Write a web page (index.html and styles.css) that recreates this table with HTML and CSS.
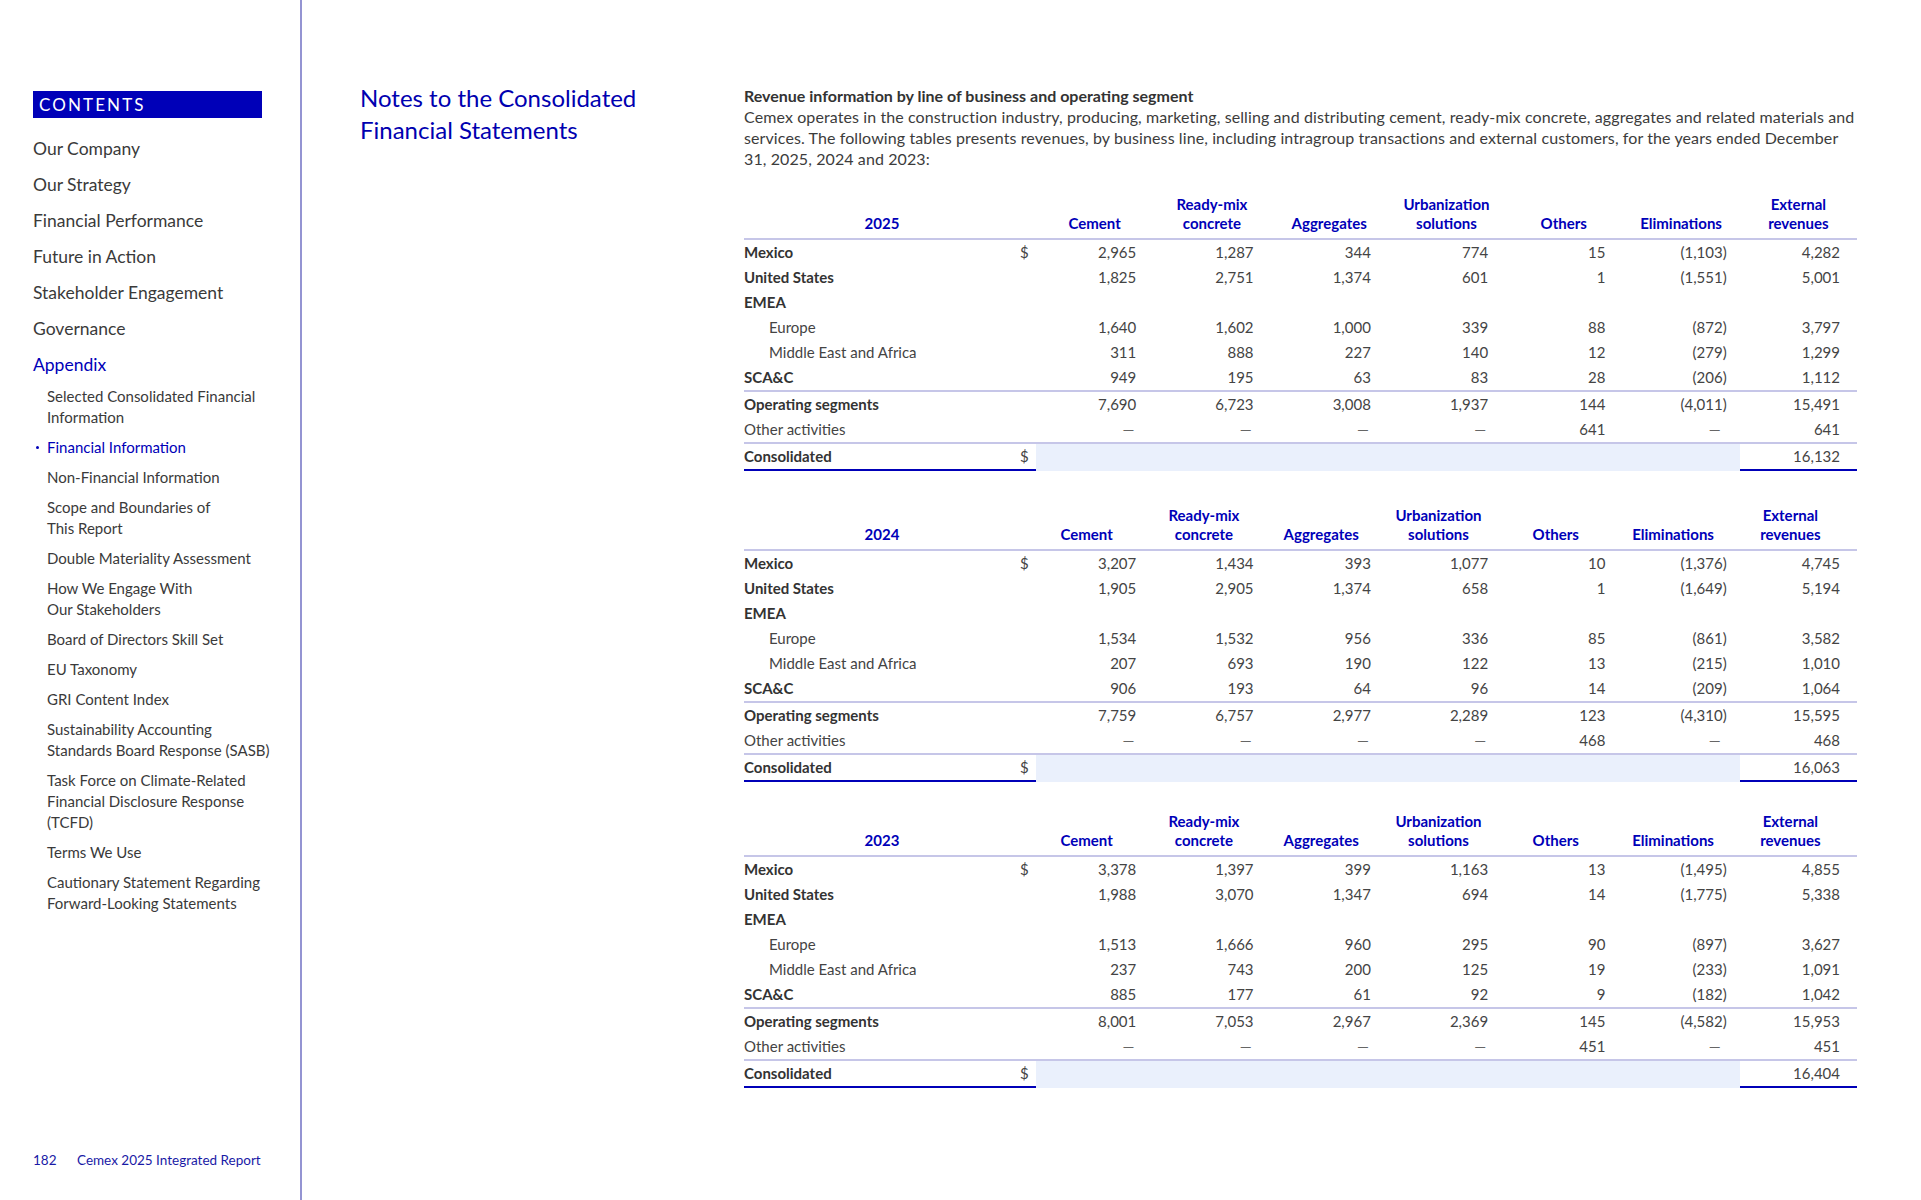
FILE: index.html
```html
<!DOCTYPE html>
<html lang="en">
<head>
<meta charset="UTF-8">
<meta name="viewport" content="width=device-width, initial-scale=1.0">
<title>Notes to the Consolidated Financial Statements</title>
<link rel="stylesheet" href="styles.css">
</head>
<body>

<div class="page">
  <aside class="sidebar">
    <div class="contents-label">CONTENTS</div>
    <ul class="nav">
      <li>Our Company</li>
      <li>Our Strategy</li>
      <li>Financial Performance</li>
      <li>Future in Action</li>
      <li>Stakeholder Engagement</li>
      <li>Governance</li>
      <li class="nav-active">Appendix
        <ul class="subnav">
          <li>Selected Consolidated Financial<br>Information</li>
          <li class="current">Financial Information</li>
          <li>Non-Financial Information</li>
          <li>Scope and Boundaries of<br>This Report</li>
          <li>Double Materiality Assessment</li>
          <li>How We Engage With<br>Our Stakeholders</li>
          <li>Board of Directors Skill Set</li>
          <li>EU Taxonomy</li>
          <li>GRI Content Index</li>
          <li>Sustainability Accounting<br>Standards Board Response (SASB)</li>
          <li>Task Force on Climate-Related<br>Financial Disclosure Response<br>(TCFD)</li>
          <li>Terms We Use</li>
          <li>Cautionary Statement Regarding<br>Forward-Looking Statements</li>
        </ul>
      </li>
    </ul>
    <div class="page-footer">
      <span class="page-num">182</span>
      <span>Cemex 2025 Integrated Report</span>
    </div>
  </aside>

  <main class="main">
    <h1 class="page-title">Notes to the Consolidated<br>Financial Statements</h1>

    <section class="content">
      <h2 class="section-head">Revenue information by line of business and operating segment</h2>
      <p class="intro">Cemex operates in the construction industry, producing, marketing, selling and distributing cement, ready-mix concrete, aggregates and related materials and services. The following tables presents revenues, by business line, including intragroup transactions and external customers, for the years ended December 31, 2025, 2024 and 2023:</p>

      <!-- 2025 -->
      <table class="rev-table first">
        <colgroup>
          <col class="c-label"><col class="c-cur">
          <col><col><col><col><col><col><col>
        </colgroup>
        <thead>
          <tr>
            <th>2025</th><th></th>
            <th>Cement</th><th>Ready-mix<br>concrete</th><th>Aggregates</th><th>Urbanization<br>solutions</th><th>Others</th><th>Eliminations</th><th>External<br>revenues</th>
          </tr>
        </thead>
        <tbody>
          <tr class="row-strong"><td class="label">Mexico</td><td class="cur">$</td><td class="num">2,965</td><td class="num">1,287</td><td class="num">344</td><td class="num">774</td><td class="num">15</td><td class="num neg">(1,103)</td><td class="num">4,282</td></tr>
          <tr class="row-strong"><td class="label">United States</td><td class="cur"></td><td class="num">1,825</td><td class="num">2,751</td><td class="num">1,374</td><td class="num">601</td><td class="num">1</td><td class="num neg">(1,551)</td><td class="num">5,001</td></tr>
          <tr class="row-strong"><td class="label">EMEA</td><td class="cur"></td><td></td><td></td><td></td><td></td><td></td><td></td><td></td></tr>
          <tr class="row-indent"><td class="label">Europe</td><td class="cur"></td><td class="num">1,640</td><td class="num">1,602</td><td class="num">1,000</td><td class="num">339</td><td class="num">88</td><td class="num neg">(872)</td><td class="num">3,797</td></tr>
          <tr class="row-indent"><td class="label">Middle East and Africa</td><td class="cur"></td><td class="num">311</td><td class="num">888</td><td class="num">227</td><td class="num">140</td><td class="num">12</td><td class="num neg">(279)</td><td class="num">1,299</td></tr>
          <tr class="row-strong"><td class="label">SCA&amp;C</td><td class="cur"></td><td class="num">949</td><td class="num">195</td><td class="num">63</td><td class="num">83</td><td class="num">28</td><td class="num neg">(206)</td><td class="num">1,112</td></tr>
          <tr class="row-strong row-sub"><td class="label">Operating segments</td><td class="cur"></td><td class="num">7,690</td><td class="num">6,723</td><td class="num">3,008</td><td class="num">1,937</td><td class="num">144</td><td class="num neg">(4,011)</td><td class="num">15,491</td></tr>
          <tr><td class="label">Other activities</td><td class="cur"></td><td class="num nil">—</td><td class="num nil">—</td><td class="num nil">—</td><td class="num nil">—</td><td class="num">641</td><td class="num nil">—</td><td class="num">641</td></tr>
          <tr class="row-strong row-total"><td class="label">Consolidated</td><td class="cur">$</td><td class="fill"></td><td class="fill"></td><td class="fill"></td><td class="fill"></td><td class="fill"></td><td class="fill"></td><td class="num ext">16,132</td></tr>
        </tbody>
      </table>

      <!-- 2024 -->
      <table class="rev-table shifted second">
        <colgroup>
          <col class="c-label"><col class="c-cur">
          <col><col><col><col><col><col><col>
        </colgroup>
        <thead>
          <tr>
            <th>2024</th><th></th>
            <th>Cement</th><th>Ready-mix<br>concrete</th><th>Aggregates</th><th>Urbanization<br>solutions</th><th>Others</th><th>Eliminations</th><th>External<br>revenues</th>
          </tr>
        </thead>
        <tbody>
          <tr class="row-strong"><td class="label">Mexico</td><td class="cur">$</td><td class="num">3,207</td><td class="num">1,434</td><td class="num">393</td><td class="num">1,077</td><td class="num">10</td><td class="num neg">(1,376)</td><td class="num">4,745</td></tr>
          <tr class="row-strong"><td class="label">United States</td><td class="cur"></td><td class="num">1,905</td><td class="num">2,905</td><td class="num">1,374</td><td class="num">658</td><td class="num">1</td><td class="num neg">(1,649)</td><td class="num">5,194</td></tr>
          <tr class="row-strong"><td class="label">EMEA</td><td class="cur"></td><td></td><td></td><td></td><td></td><td></td><td></td><td></td></tr>
          <tr class="row-indent"><td class="label">Europe</td><td class="cur"></td><td class="num">1,534</td><td class="num">1,532</td><td class="num">956</td><td class="num">336</td><td class="num">85</td><td class="num neg">(861)</td><td class="num">3,582</td></tr>
          <tr class="row-indent"><td class="label">Middle East and Africa</td><td class="cur"></td><td class="num">207</td><td class="num">693</td><td class="num">190</td><td class="num">122</td><td class="num">13</td><td class="num neg">(215)</td><td class="num">1,010</td></tr>
          <tr class="row-strong"><td class="label">SCA&amp;C</td><td class="cur"></td><td class="num">906</td><td class="num">193</td><td class="num">64</td><td class="num">96</td><td class="num">14</td><td class="num neg">(209)</td><td class="num">1,064</td></tr>
          <tr class="row-strong row-sub"><td class="label">Operating segments</td><td class="cur"></td><td class="num">7,759</td><td class="num">6,757</td><td class="num">2,977</td><td class="num">2,289</td><td class="num">123</td><td class="num neg">(4,310)</td><td class="num">15,595</td></tr>
          <tr><td class="label">Other activities</td><td class="cur"></td><td class="num nil">—</td><td class="num nil">—</td><td class="num nil">—</td><td class="num nil">—</td><td class="num">468</td><td class="num nil">—</td><td class="num">468</td></tr>
          <tr class="row-strong row-total"><td class="label">Consolidated</td><td class="cur">$</td><td class="fill"></td><td class="fill"></td><td class="fill"></td><td class="fill"></td><td class="fill"></td><td class="fill"></td><td class="num ext">16,063</td></tr>
        </tbody>
      </table>

      <!-- 2023 -->
      <table class="rev-table shifted third">
        <colgroup>
          <col class="c-label"><col class="c-cur">
          <col><col><col><col><col><col><col>
        </colgroup>
        <thead>
          <tr>
            <th>2023</th><th></th>
            <th>Cement</th><th>Ready-mix<br>concrete</th><th>Aggregates</th><th>Urbanization<br>solutions</th><th>Others</th><th>Eliminations</th><th>External<br>revenues</th>
          </tr>
        </thead>
        <tbody>
          <tr class="row-strong"><td class="label">Mexico</td><td class="cur">$</td><td class="num">3,378</td><td class="num">1,397</td><td class="num">399</td><td class="num">1,163</td><td class="num">13</td><td class="num neg">(1,495)</td><td class="num">4,855</td></tr>
          <tr class="row-strong"><td class="label">United States</td><td class="cur"></td><td class="num">1,988</td><td class="num">3,070</td><td class="num">1,347</td><td class="num">694</td><td class="num">14</td><td class="num neg">(1,775)</td><td class="num">5,338</td></tr>
          <tr class="row-strong"><td class="label">EMEA</td><td class="cur"></td><td></td><td></td><td></td><td></td><td></td><td></td><td></td></tr>
          <tr class="row-indent"><td class="label">Europe</td><td class="cur"></td><td class="num">1,513</td><td class="num">1,666</td><td class="num">960</td><td class="num">295</td><td class="num">90</td><td class="num neg">(897)</td><td class="num">3,627</td></tr>
          <tr class="row-indent"><td class="label">Middle East and Africa</td><td class="cur"></td><td class="num">237</td><td class="num">743</td><td class="num">200</td><td class="num">125</td><td class="num">19</td><td class="num neg">(233)</td><td class="num">1,091</td></tr>
          <tr class="row-strong"><td class="label">SCA&amp;C</td><td class="cur"></td><td class="num">885</td><td class="num">177</td><td class="num">61</td><td class="num">92</td><td class="num">9</td><td class="num neg">(182)</td><td class="num">1,042</td></tr>
          <tr class="row-strong row-sub"><td class="label">Operating segments</td><td class="cur"></td><td class="num">8,001</td><td class="num">7,053</td><td class="num">2,967</td><td class="num">2,369</td><td class="num">145</td><td class="num neg">(4,582)</td><td class="num">15,953</td></tr>
          <tr><td class="label">Other activities</td><td class="cur"></td><td class="num nil">—</td><td class="num nil">—</td><td class="num nil">—</td><td class="num nil">—</td><td class="num">451</td><td class="num nil">—</td><td class="num">451</td></tr>
          <tr class="row-strong row-total"><td class="label">Consolidated</td><td class="cur">$</td><td class="fill"></td><td class="fill"></td><td class="fill"></td><td class="fill"></td><td class="fill"></td><td class="fill"></td><td class="num ext">16,404</td></tr>
        </tbody>
      </table>
    </section>
  </main>
</div>

</body>
</html>
```

FILE: styles.css
```css
body {
  margin: 0;
  font-family: Lato, "Noto Sans", sans-serif;
  color: #3a3a3a;
  background-color: #fff;
}
.page {
  display: flex;
  height: 1200px;
}

/* sidebar */
.sidebar {
  box-sizing: border-box;
  width: 302px;
  flex: none;
  border-right: 2px solid #9494d2;
  padding: 91px 0 31px 33px;
  display: flex;
  flex-direction: column;
}
.contents-label {
  box-sizing: border-box;
  width: 229px;
  height: 27px;
  padding-left: 6px;
  background-color: #0000b8;
  color: #fff;
  font-size: 17px;
  line-height: 27px;
  letter-spacing: 2.1px;
}
.nav {
  list-style: none;
  margin: 13px 0 0;
  padding: 0;
  font-size: 17.5px;
  line-height: 36px;
  color: #3a3a3a;
}
.nav-active { color: #0000b8; }
.subnav {
  list-style: none;
  margin: 3px 0 0;
  padding-left: 14px;
  font-size: 15px;
  line-height: 21px;
  color: #3a3a3a;
}
.subnav li {
  position: relative;
  margin-bottom: 9px;
  white-space: nowrap;
}
.subnav .current { color: #0000b8; }
.subnav .current::before {
  content: "";
  position: absolute;
  left: -11px;
  top: 9px;
  width: 3px;
  height: 3px;
  border-radius: 50%;
  background-color: #0000b8;
}
.page-footer {
  margin-top: auto;
  display: flex;
  font-size: 13.5px;
  line-height: 18px;
  color: #1a1aa6;
}
.page-num { width: 44px; }

/* main column */
.main {
  flex: 1;
  display: flex;
  align-items: flex-start;
  padding: 82px 64px 0 58px;
}
.page-title {
  flex: none;
  width: 384px;
  margin: 0;
  font-size: 24px;
  line-height: 32px;
  font-weight: 400;
  color: #0000b0;
}
.content {
  flex: 1;
  padding-top: 3px;
}
.section-head {
  margin: 0;
  font-size: 16px;
  line-height: 21px;
  font-weight: 700;
  color: #333;
}
.intro {
  margin: 0;
  font-size: 16px;
  line-height: 21px;
  letter-spacing: 0.1px;
  color: #3c3c3c;
}

/* tables */
.rev-table {
  width: 100%;
  table-layout: fixed;
  border-collapse: separate;
  border-spacing: 0;
  font-size: 15px;
}
.rev-table.first { margin-top: 26px; }
.rev-table.second { margin-top: 35px; }
.rev-table.third { margin-top: 30px; }
.c-label { width: 276px; }
.c-cur { width: 16px; }
.rev-table th {
  padding: 0 0 6px;
  vertical-align: bottom;
  text-align: center;
  font-weight: 700;
  line-height: 18.5px;
  color: #0000b8;
  border-bottom: 2px solid #c6c6e8;
}
.shifted th + th + th { padding-right: 16px; }
.rev-table td {
  padding: 0;
  line-height: 25px;
  white-space: nowrap;
  color: #444;
}
.rev-table td.num {
  text-align: right;
  padding-right: 17px;
}
.rev-table td.neg { padding-right: 13px; }
.rev-table td.nil {
  padding-right: 19px;
  color: #666;
}
.row-strong td.label {
  font-weight: 700;
  color: #333;
}
.row-indent td.label { padding-left: 25px; }
.row-sub td,
.row-total td { border-top: 2px solid #c6c6e8; }
.row-total td.label,
.row-total td.cur,
.row-total td.ext { border-bottom: 2px solid #0000b8; }
.row-total td.fill {
  background-color: #eaf0fc;
  border-bottom: 2px solid transparent;
}
```
